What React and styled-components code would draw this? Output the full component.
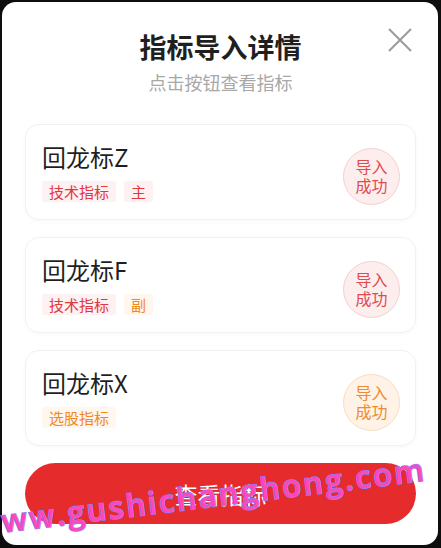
import styled, { createGlobalStyle } from "styled-components";

const GlobalStyle = createGlobalStyle`
  html, body {
    margin: 0;
    padding: 0;
    background: #0d0d0d;
  }
  body {
    font-family: "Noto Sans CJK SC", "Noto Sans", sans-serif;
  }
`;

const Backdrop = styled.div`
  width: 441px;
  height: 548px;
  padding: 2px 3px 3px 2px;
  box-sizing: border-box;
  position: relative;
  overflow: hidden;
`;

const Modal = styled.div`
  width: 100%;
  height: 100%;
  background: #fff;
  border-radius: 14px;
  display: flex;
  flex-direction: column;
  position: relative;
  box-sizing: border-box;
  padding: 0 22px 0 23px;
`;

const Header = styled.div`
  display: flex;
  flex-direction: column;
  align-items: center;
  padding-top: 28px;
`;

const Title = styled.h1`
  margin: 0;
  font-size: 27px;
  line-height: 34px;
  font-weight: 700;
  color: #1f1f1f;
`;

const Subtitle = styled.div`
  margin-top: 6px;
  font-size: 18px;
  line-height: 24px;
  color: #a8a8a8;
`;

const Close = styled.button`
  position: absolute;
  top: 26px;
  right: 26px;
  width: 24px;
  height: 24px;
  border: none;
  background: none;
  padding: 0;
  cursor: pointer;
`;

const List = styled.div`
  display: flex;
  flex-direction: column;
  gap: 17px;
  margin-top: 30px;
`;

const Card = styled.div`
  height: 96px;
  box-sizing: border-box;
  border: 1px solid #f1f1f1;
  border-radius: 14px;
  box-shadow: 0 1px 4px rgba(0, 0, 0, 0.03);
  display: flex;
  align-items: center;
  justify-content: space-between;
  padding: 0 15px 0 16px;
`;

const Info = styled.div`
  display: flex;
  flex-direction: column;
  gap: 10px;
`;

const Name = styled.div`
  font-size: 24px;
  line-height: 28px;
  color: #1f1f1f;
`;

const Tags = styled.div`
  display: flex;
  gap: 8px;
`;

const palette = {
  red: { text: "#e2373c", bg: "#fdf1f1", circle: "#fdeeee", border: "#f5cfd1", badge: "#e24a50" },
  orange: { text: "#f0891f", bg: "#fff6ee", circle: "#fff3e7", border: "#f9dcc1", badge: "#ef8a2e" },
};

const Tag = styled.span`
  font-size: 15px;
  line-height: 21px;
  padding: 0 7px;
  border-radius: 3px;
  color: ${(p) => palette[p.$tone].text};
  background: ${(p) => palette[p.$tone].bg};
`;

const Badge = styled.div`
  width: 57px;
  height: 57px;
  border-radius: 50%;
  box-sizing: border-box;
  margin-top: 8px;
  background: ${(p) => palette[p.$tone].circle};
  border: 1px solid ${(p) => palette[p.$tone].border};
  color: ${(p) => palette[p.$tone].badge};
  font-size: 16px;
  line-height: 19px;
  display: flex;
  flex-direction: column;
  align-items: center;
  justify-content: center;
`;

const Action = styled.button`
  margin-top: 17px;
  height: 61px;
  border: none;
  border-radius: 31px;
  background: #e62b2d;
  color: #fff;
  font-family: "Noto Sans CJK SC", sans-serif;
  font-size: 23px;
  cursor: pointer;
`;

const Watermark = styled.div`
  position: absolute;
  left: -26px;
  top: 506px;
  transform: rotate(-7deg);
  transform-origin: left center;
  font-family: "Open Sans", "DejaVu Sans", sans-serif;
  font-size: 31px;
  line-height: 36px;
  font-weight: 600;
  letter-spacing: 2.4px;
  white-space: nowrap;
  color: #ff47b8;
  -webkit-text-stroke: 1.5px #8c7dff;
  paint-order: stroke fill;
  pointer-events: none;
`;

const items = [
  { name: "回龙标Z", tags: [["技术指标", "red"], ["主", "red"]], tone: "red" },
  { name: "回龙标F", tags: [["技术指标", "red"], ["副", "orange"]], tone: "red" },
  { name: "回龙标X", tags: [["选股指标", "orange"]], tone: "orange" },
];

export default function App() {
  return (
    <Backdrop>
      <GlobalStyle />
      <Modal>
        <Header>
          <Title>指标导入详情</Title>
          <Subtitle>点击按钮查看指标</Subtitle>
        </Header>
        <Close aria-label="关闭">
          <svg width="24" height="24" viewBox="0 0 24 24">
            <path d="M1 1 L23 23 M23 1 L1 23" stroke="#9a9a9a" strokeWidth="2" />
          </svg>
        </Close>
        <List>
          {items.map((it) => (
            <Card key={it.name}>
              <Info>
                <Name>{it.name}</Name>
                <Tags>
                  {it.tags.map(([label, tone]) => (
                    <Tag key={label} $tone={tone}>{label}</Tag>
                  ))}
                </Tags>
              </Info>
              <Badge $tone={it.tone}>
                <span>导入</span>
                <span>成功</span>
              </Badge>
            </Card>
          ))}
        </List>
        <Action>查看指标</Action>
      </Modal>
      <Watermark>www.gushichanghong.com</Watermark>
    </Backdrop>
  );
}
